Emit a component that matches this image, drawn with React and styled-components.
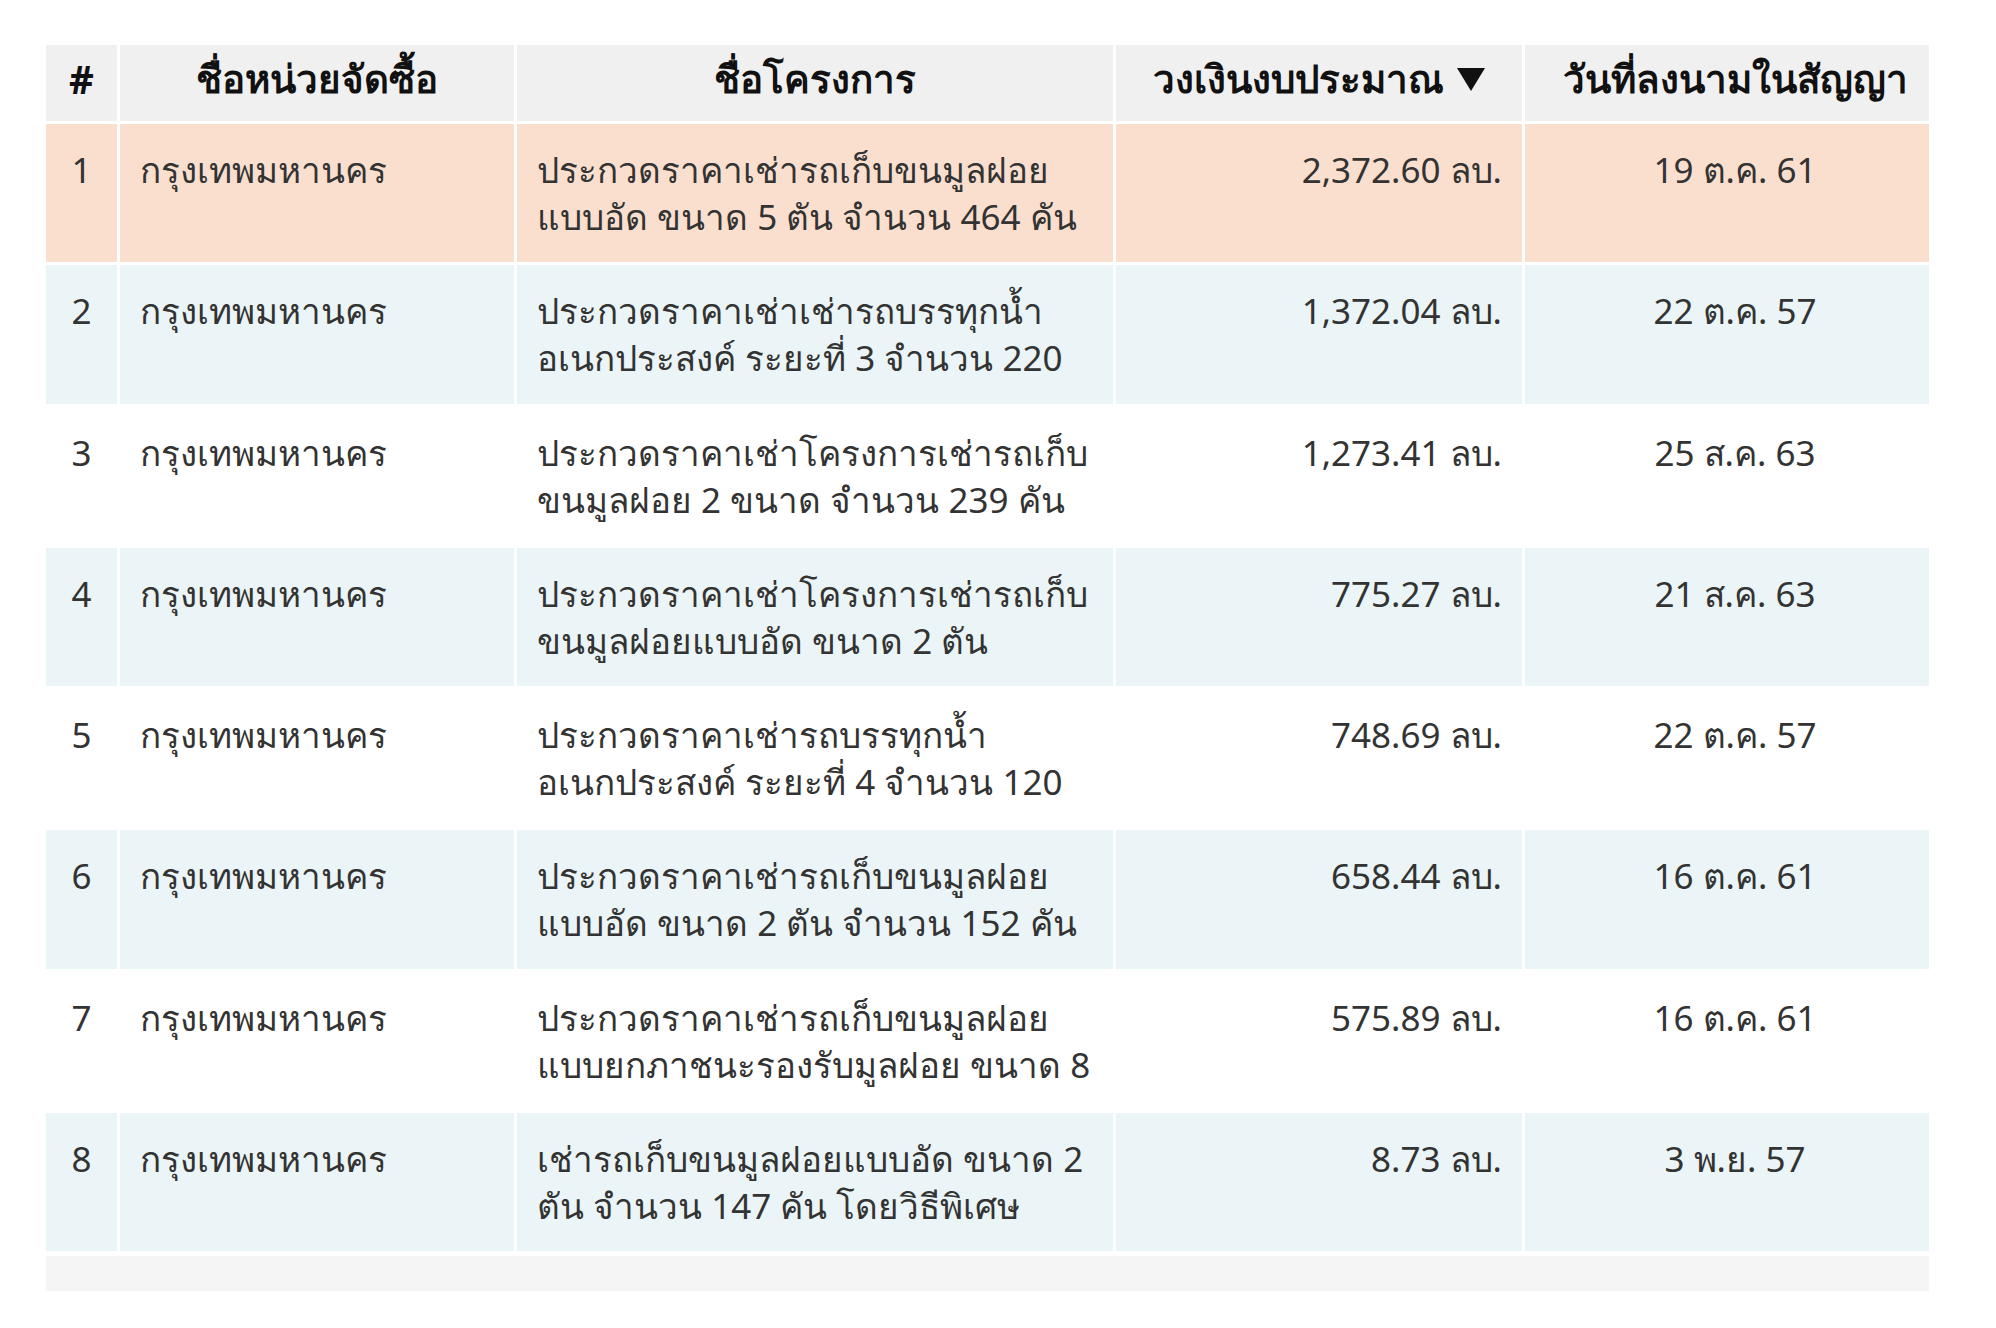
import React from "react";
import styled, { createGlobalStyle } from "styled-components";

const Global = createGlobalStyle`
  html, body { margin: 0; padding: 0; background: #ffffff; }
  body { font-family: "Noto Sans", "Liberation Sans", sans-serif; }
`;

const Page = styled.div`
  padding: 45px 0 36px 46px;
`;

const Table = styled.div`
  display: flex;
  flex-direction: column;
  gap: 3px;
  width: 1883px;
`;

const Row = styled.div`
  display: grid;
  grid-template-columns: 71px 394px 596px 406px 404px;
  column-gap: 3px;
  --row-bg: ${(p) =>
    p.$variant === "head"
      ? "#f0f0f0"
      : p.$variant === "hot"
      ? "#fadfcf"
      : p.$variant === "alt"
      ? "#ebf4f6"
      : "#ffffff"};
`;

const HeadCell = styled.div`
  background: var(--row-bg);
  height: 76px;
  box-sizing: border-box;
  display: flex;
  align-items: center;
  justify-content: center;
  gap: 12px;
  padding: ${(p) => (p.$shift ? "0 0 8px 16px" : "0 0 8px 0")};
  font-size: 38.5px;
  font-weight: 700;
  color: #111111;
  white-space: nowrap;
`;

const Cell = styled.div`
  background: var(--row-bg);
  height: 138.25px;
  box-sizing: border-box;
  padding: ${(p) =>
    p.$align === "right"
      ? "22px 20px 0 12px"
      : p.$align === "center"
      ? p.$shift
        ? "22px 4px 0 20px"
        : "22px 4px 0 4px"
      : "22px 8px 0 20px"};
  text-align: ${(p) => p.$align || "left"};
  font-size: 35px;
  line-height: 47px;
  color: #333333;
  overflow: hidden;
`;

const Line = styled.div`
  white-space: nowrap;
`;

const Footer = styled.div`
  height: 35px;
  margin-top: 2px;
  background: #f5f5f5;
`;

const SortArrow = () => (
  <svg width="30" height="26" viewBox="0 0 30 26" aria-hidden="true">
    <polygon points="1,2 29,2 15,25" fill="#111111" />
  </svg>
);

const rows = [
  {
    n: 1,
    org: "กรุงเทพมหานคร",
    project: ["ประกวดราคาเช่ารถเก็บขนมูลฝอย", "แบบอัด ขนาด 5 ตัน จำนวน 464 คัน"],
    budget: "2,372.60 ลบ.",
    date: "19 ต.ค. 61",
  },
  {
    n: 2,
    org: "กรุงเทพมหานคร",
    project: ["ประกวดราคาเช่าเช่ารถบรรทุกน้ำ", "อเนกประสงค์ ระยะที่ 3 จำนวน 220"],
    budget: "1,372.04 ลบ.",
    date: "22 ต.ค. 57",
  },
  {
    n: 3,
    org: "กรุงเทพมหานคร",
    project: ["ประกวดราคาเช่าโครงการเช่ารถเก็บ", "ขนมูลฝอย 2 ขนาด จำนวน 239 คัน"],
    budget: "1,273.41 ลบ.",
    date: "25 ส.ค. 63",
  },
  {
    n: 4,
    org: "กรุงเทพมหานคร",
    project: ["ประกวดราคาเช่าโครงการเช่ารถเก็บ", "ขนมูลฝอยแบบอัด ขนาด 2 ตัน"],
    budget: "775.27 ลบ.",
    date: "21 ส.ค. 63",
  },
  {
    n: 5,
    org: "กรุงเทพมหานคร",
    project: ["ประกวดราคาเช่ารถบรรทุกน้ำ", "อเนกประสงค์ ระยะที่ 4 จำนวน 120"],
    budget: "748.69 ลบ.",
    date: "22 ต.ค. 57",
  },
  {
    n: 6,
    org: "กรุงเทพมหานคร",
    project: ["ประกวดราคาเช่ารถเก็บขนมูลฝอย", "แบบอัด ขนาด 2 ตัน จำนวน 152 คัน"],
    budget: "658.44 ลบ.",
    date: "16 ต.ค. 61",
  },
  {
    n: 7,
    org: "กรุงเทพมหานคร",
    project: ["ประกวดราคาเช่ารถเก็บขนมูลฝอย", "แบบยกภาชนะรองรับมูลฝอย ขนาด 8"],
    budget: "575.89 ลบ.",
    date: "16 ต.ค. 61",
  },
  {
    n: 8,
    org: "กรุงเทพมหานคร",
    project: ["เช่ารถเก็บขนมูลฝอยแบบอัด ขนาด 2", "ตัน จำนวน 147 คัน โดยวิธีพิเศษ"],
    budget: "8.73 ลบ.",
    date: "3 พ.ย. 57",
  },
];

export default function App() {
  return (
    <Page>
      <Global />
      <Table>
        <Row $variant="head">
          <HeadCell>#</HeadCell>
          <HeadCell>ชื่อหน่วยจัดซื้อ</HeadCell>
          <HeadCell>ชื่อโครงการ</HeadCell>
          <HeadCell>
            วงเงินงบประมาณ
            <SortArrow />
          </HeadCell>
          <HeadCell $shift>วันที่ลงนามในสัญญา</HeadCell>
        </Row>
        {rows.map((r, i) => (
          <Row key={r.n} $variant={i === 0 ? "hot" : i % 2 === 1 ? "alt" : "plain"}>
            <Cell $align="center">{r.n}</Cell>
            <Cell>{r.org}</Cell>
            <Cell>
              {r.project.map((l) => (
                <Line key={l}>{l}</Line>
              ))}
            </Cell>
            <Cell $align="right">{r.budget}</Cell>
            <Cell $align="center" $shift>
              {r.date}
            </Cell>
          </Row>
        ))}
        <Footer />
      </Table>
    </Page>
  );
}
